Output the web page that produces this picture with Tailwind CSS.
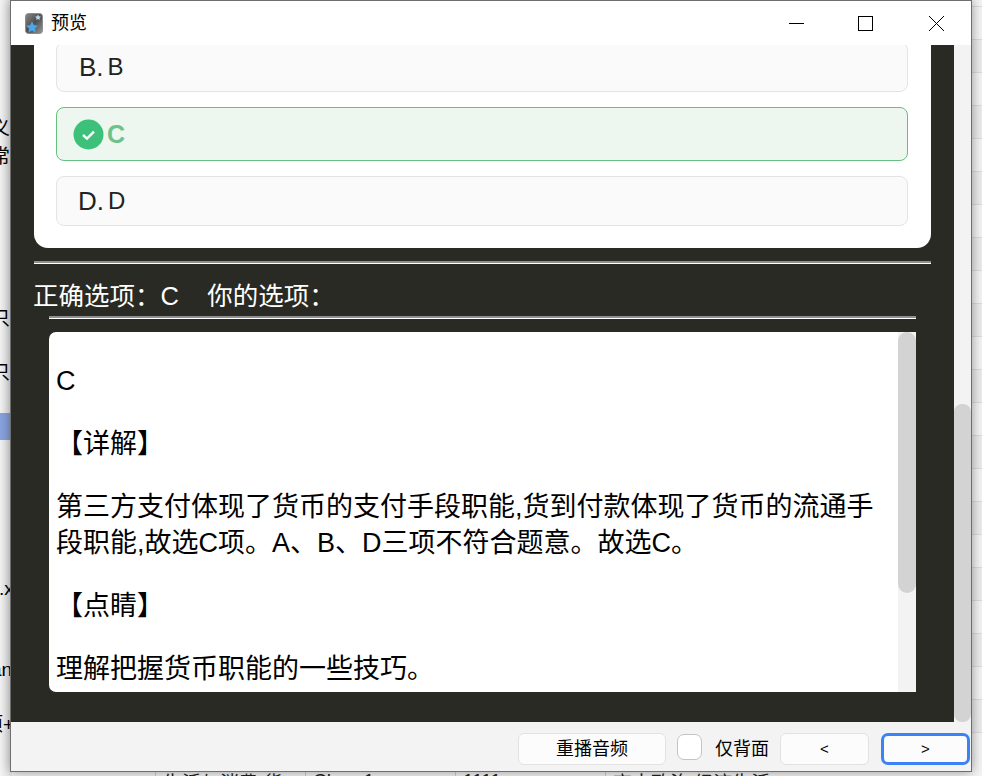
<!DOCTYPE html>
<html lang="zh">
<head>
<meta charset="utf-8">
<title>预览</title>
<script src="https://cdn.jsdelivr.net/npm/@tailwindcss/browser@4"></script>
</head>
<body class="relative w-[982px] h-[776px] overflow-hidden bg-[#f4f4f4] font-['Liberation_Sans','Noto_Sans_CJK_SC',sans-serif] text-black">

  <!-- table behind the window -->
  <div class="absolute inset-0">
    <div class="h-[7px] border-b border-[#dcdcdc]"></div>
    <div class="h-[33px] border-b border-[#dcdcdc]"></div>
    <div class="h-[33px] border-b border-[#dcdcdc] bg-[#ececec]"></div>
    <div class="h-[33px] border-b border-[#dcdcdc]"></div>
    <div class="h-[33px] border-b border-[#dcdcdc] bg-[#ececec]"></div>
    <div class="h-[33px] border-b border-[#dcdcdc]"></div>
    <div class="h-[33px] border-b border-[#dcdcdc] bg-[#ececec]"></div>
    <div class="h-[33px] border-b border-[#dcdcdc]"></div>
    <div class="h-[33px] border-b border-[#dcdcdc] bg-[#ececec]"></div>
    <div class="h-[33px] border-b border-[#dcdcdc]"></div>
    <div class="h-[33px] border-b border-[#dcdcdc] bg-[#ececec]"></div>
    <div class="h-[33px] border-b border-[#dcdcdc]"></div>
    <div class="h-[33px] border-b border-[#dcdcdc] bg-[#ececec]"></div>
    <div class="h-[33px] border-b border-[#dcdcdc]"></div>
    <div class="h-[33px] border-b border-[#dcdcdc] bg-[#ececec]"></div>
    <div class="h-[33px] border-b border-[#dcdcdc]"></div>
    <div class="h-[33px] border-b border-[#dcdcdc] bg-[#ececec]"></div>
    <div class="h-[33px] border-b border-[#dcdcdc]"></div>
    <div class="h-[33px] border-b border-[#dcdcdc] bg-[#ececec]"></div>
    <div class="h-[33px] border-b border-[#dcdcdc]"></div>
    <div class="h-[33px] border-b border-[#dcdcdc] bg-[#ececec]"></div>
    <div class="h-[33px] border-b border-[#dcdcdc]"></div>
    <div class="h-[33px] border-b border-[#dcdcdc] bg-[#ececec]"></div>
  </div>
  <div class="absolute left-0 top-0 w-[12px] h-[776px] bg-gradient-to-r from-[#f4f4f4] to-[#e6e6e6]"></div>
  <div class="absolute left-0 top-[413px] w-[12px] h-[27px] bg-[#8aa4e0]"></div>
  <span class="absolute left-[-9px] top-[116px] text-[19px] leading-[26px]">义</span>
  <span class="absolute left-[-9px] top-[144px] text-[19px] leading-[26px]">常</span>
  <span class="absolute left-[-9px] top-[306px] text-[19px] leading-[26px]">只</span>
  <span class="absolute left-[-9px] top-[360px] text-[19px] leading-[26px]">只</span>
  <span class="absolute left-[-1px] top-[576px] text-[19px] leading-[26px]">.x</span>
  <span class="absolute left-[-9px] top-[657px] text-[19px] leading-[26px]">an</span>
  <span class="absolute left-[-16px] top-[712px] text-[19px] leading-[26px]">项+</span>

  <!-- bottom row of the table, mostly cut off -->
  <div class="absolute left-[155px] top-[771px] flex h-[30px] text-[19px] leading-[26px] text-[#222]">
    <div class="w-[150px] pl-[7px] border-l border-[#cfcfcf]">生活与消费 货</div>
    <div class="w-[150px] pl-[7px] border-l border-[#cfcfcf] leading-[20px]">Chap 1</div>
    <div class="w-[150px] pl-[7px] border-l border-[#cfcfcf] leading-[20px]">1111</div>
    <div class="w-[200px] pl-[7px] border-l border-[#cfcfcf]">高中政治 经济生活</div>
  </div>

  <!-- preview window -->
  <div class="absolute left-[10px] top-0 w-[962px] h-[772px] flex flex-col border border-[#6e6e6e] bg-[#f3f3f3] shadow-[0_0_11px_rgba(0,0,0,0.4)]">

    <div class="h-[44px] shrink-0 flex items-center bg-white">
      <svg class="ml-[14px] mr-[8px]" width="18" height="24" viewBox="0 0 18 24">
        <defs>
          <linearGradient id="appbg" x1="0" y1="0" x2="1" y2="1">
            <stop offset="0" stop-color="#8a8a8a"/>
            <stop offset="0.5" stop-color="#4d4d4d"/>
            <stop offset="1" stop-color="#9a9a9a"/>
          </linearGradient>
        </defs>
        <rect x="0.5" y="2.5" width="17" height="20" rx="3" fill="url(#appbg)" stroke="#8c8c8c"/>
        <path d="M7 10.5l1.9 3.6 4 .6-2.9 2.8.7 4-3.7-1.9-3.6 1.9.7-4-2.9-2.8 4-.6z" fill="#4aa8ea"/>
        <path d="M13 3.5l.9 1.8 2 .3-1.4 1.4.3 2-1.8-.9-1.8.9.3-2-1.4-1.4 2-.3z" fill="#b9d6ee"/>
      </svg>
      <span class="text-[18px] leading-none">预览</span>
      <div class="ml-auto flex items-center">
        <svg class="mr-[54px]" width="15" height="15" viewBox="0 0 15 15"><path d="M0 7.5h15" stroke="#000" stroke-width="1"/></svg>
        <svg class="mr-[56px]" width="15" height="15" viewBox="0 0 15 15"><rect x="0.5" y="0.5" width="14" height="14" fill="none" stroke="#000"/></svg>
        <svg class="mr-[27px]" width="15" height="15" viewBox="0 0 15 15"><path d="M0 0l15 15M15 0L0 15" stroke="#000" stroke-width="1"/></svg>
      </div>
    </div>

    <div class="flex-1 min-h-0 flex">
      <div class="w-[943px] overflow-hidden bg-[#2a2a24] pl-[23px]">
        <!-- question card, scrolled up past its top -->
        <div class="w-[897px] -mt-[3px] pl-[22px] pr-[23px] pb-[22px] bg-white rounded-b-[14px] flex flex-col gap-[15px]">
          <div class="h-[50px] flex items-center pl-[22px] bg-[#fafafa] border border-[#e4e4e4] rounded-[8px] text-[#222] text-[26px]">B.<span class="ml-[4px] text-[24px]">B</span></div>
          <div class="h-[54px] flex items-center pl-[16px] bg-[#edf6ef] border border-[#67c07f] rounded-[8px]">
            <svg width="31" height="31" viewBox="0 0 31 31">
              <circle cx="15.5" cy="15.5" r="15" fill="#3cc07a"/>
              <path d="M10 16l4 3.6 7-7" fill="none" stroke="#fff" stroke-width="2.4"/>
            </svg>
            <span class="ml-[3px] mt-[2px] text-[25px] font-bold text-[#6cc38a]">C</span>
          </div>
          <div class="h-[50px] flex items-center pl-[21px] bg-[#fafafa] border border-[#e4e4e4] rounded-[8px] text-[#222] text-[26px]">D.<span class="ml-[4px] text-[24px]">D</span></div>
        </div>

        <div class="w-[897px] h-[3px] mt-[13px] bg-white border-t-2 border-[#8f8f8f]"></div>
        <div class="h-[52px] pt-[12px] flex items-center text-white text-[25.5px] whitespace-pre -ml-[1px]">正确选项：C    你的选项：</div>
        <div class="ml-[15px] w-[867px] h-[3px] bg-white border-t-2 border-[#8f8f8f]"></div>

        <!-- explanation panel -->
        <div class="ml-[15px] mt-[13px] w-[867px] h-[360px] flex overflow-hidden rounded-l-[7px] bg-white">
          <div class="flex-1 overflow-hidden pl-[7px] pt-[31px] pr-[20px] text-[27px] leading-[36px] flex flex-col gap-[27px]">
            <p>C</p>
            <p>【详解】</p>
            <p>第三方支付体现了货币的支付手段职能,货到付款体现了货币的流通手段职能,故选C项。A、B、D三项不符合题意。故选C。</p>
            <p>【点睛】</p>
            <p>理解把握货币职能的一些技巧。<span class="block mt-[2px]">货币的基本职能是价值尺度和流通手段。</span></p>
          </div>
          <div class="w-[18px] shrink-0 bg-[#f3f3f3]">
            <div class="h-[261px] rounded-[9px] bg-[#d3d3d3]"></div>
          </div>
        </div>
      </div>
      <!-- outer scrollbar -->
      <div class="w-[17px] flex flex-col justify-end bg-[#f3f3f3]">
        <div class="h-[318px] rounded-[8px] bg-[#d3d3d3]"></div>
      </div>
    </div>

    <div class="h-[49px] shrink-0 flex items-start pt-[11px] text-[18px] bg-[#f3f3f3]">
      <button class="ml-[507px] w-[148px] h-[32px] pt-[1px] bg-[#fcfcfc] border border-[#e2e2e2] rounded-[6px]">重播音频</button>
      <span class="ml-[11px] mt-[1px] w-[25px] h-[26px] bg-white border border-[#c4c4c4] rounded-[7px]"></span>
      <span class="ml-[13px] mt-[2px] leading-[28px]">仅背面</span>
      <button class="ml-[11px] w-[89px] h-[32px] pt-[1px] bg-[#fcfcfc] border border-[#e2e2e2] rounded-[6px] text-[15px]">&lt;</button>
      <button class="ml-[12px] w-[89px] h-[32px] pt-[1px] bg-[#fcfcfc] border-[3px] border-[#3b82f6] rounded-[7px] text-[15px]">&gt;</button>
    </div>
  </div>
</body>
</html>
